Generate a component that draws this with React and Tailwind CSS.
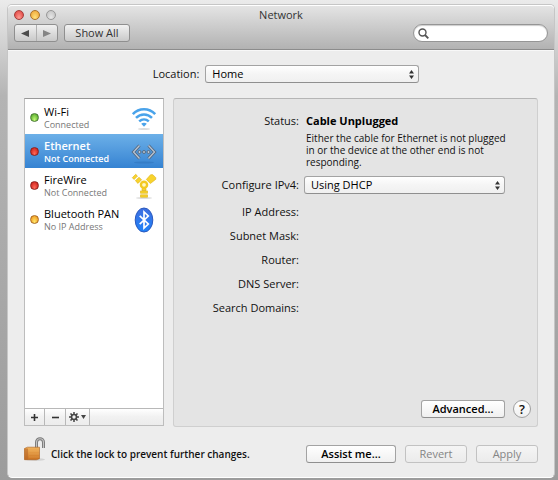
import { useState } from 'react'

const SERVICES = [
  { id: 'wifi', name: 'Wi-Fi', status: 'Connected', dot: 'green', Icon: WifiIcon },
  { id: 'ethernet', name: 'Ethernet', status: 'Not Connected', dot: 'red', Icon: EthernetIcon },
  { id: 'firewire', name: 'FireWire', status: 'Not Connected', dot: 'red', Icon: FireWireIcon },
  { id: 'bluetooth', name: 'Bluetooth PAN', status: 'No IP Address', dot: 'amber', Icon: BluetoothIcon },
]

const FIELDS = ['IP Address:', 'Subnet Mask:', 'Router:', 'DNS Server:', 'Search Domains:']

const DOTS = {
  green: 'bg-radial-[at_50%_80%] from-[#c3fa78] to-[#3f9a1c] border-[#4b7a35]',
  red: 'bg-radial-[at_50%_80%] from-[#ff6a5a] to-[#c4120f] border-[#8c2320]',
  amber: 'bg-radial-[at_50%_80%] from-[#ffe86a] to-[#ee8a12] border-[#a86a22]',
}

export default function App() {
  const [selected, setSelected] = useState('ethernet')

  return (
    <div className="min-h-screen flex flex-col pt-[4px] pb-[2px] pl-[7px] pr-[3px] bg-linear-to-b from-[#ebebeb] via-[#b4b4b4] via-20% to-[#9c9c9c] font-['Open_Sans','Noto_Sans',sans-serif] text-[11px] leading-4 font-medium text-[#111]">
      <div className="flex-1 flex flex-col rounded-[5px] border border-[#c6c6c6] border-b-white bg-[#ededed]">
        <header className="rounded-t-[4px] border-t border-t-white border-b border-b-[#8c8c8c] bg-linear-to-b from-[#e4e4e4] to-[#b2b2b2] pl-[6px] pr-[6px] h-[45px]">
          <div className="grid grid-cols-[1fr_auto_1fr] items-center h-[17px]">
            <div className="flex gap-[6px]">
              <button aria-label="Close" className="size-[10px] rounded-full border border-[#a33d3a] bg-radial-[at_50%_85%] from-[#ff9d93] to-[#dd3a38]" />
              <button aria-label="Minimize" className="size-[10px] rounded-full border border-[#a9722c] bg-radial-[at_50%_85%] from-[#ffe37e] to-[#ec9c2c]" />
              <button aria-label="Zoom" className="size-[10px] rounded-full border border-[#989898] bg-radial-[at_50%_85%] from-[#e8e8e8] to-[#bdbdbd]" />
            </div>
            <h1 className="text-[11px] leading-4 text-[#333]">Network</h1>
          </div>
          <div className="flex items-center pt-[1px]">
            <div className="flex h-[18px] w-[44px] rounded-[3px] border border-[#8f8f8f] bg-linear-to-b from-[#f0f0f0] to-[#c9c9c9]">
              <button aria-label="Back" className="flex-1 flex items-center justify-center border-r border-[#b0b0b0]">
                <svg className="w-[8px] h-[7px]" viewBox="0 0 8 7"><path d="M8 0v7L0 3.500z" fill="#4c4c4c" /></svg>
              </button>
              <button aria-label="Forward" className="flex-1 flex items-center justify-center">
                <svg className="w-[8px] h-[7px]" viewBox="0 0 8 7"><path d="M0 0v7l8-3.500z" fill="#858585" /></svg>
              </button>
            </div>
            <button className="ml-[6px] flex items-center justify-center h-[18px] w-[66px] rounded-[3px] border border-[#8f8f8f] bg-linear-to-b from-[#f2f2f2] to-[#c9c9c9] text-[#333]">Show All</button>
            <label className="ml-auto flex items-center h-[18px] w-[135px] rounded-full border border-[#959595] bg-white pl-[4px] pr-2 shadow-[inset_0_1px_1px_#ccc]">
              <svg className="size-[11px] shrink-0" viewBox="0 0 11 11" fill="none" stroke="#555">
                <circle cx="4.500" cy="4.500" r="3.500" strokeWidth="1.400" />
                <path d="M7 7l3.300 3.300" strokeWidth="1.900" />
              </svg>
              <input type="search" aria-label="Search" className="min-w-0 flex-1 bg-transparent pl-1 outline-none" />
            </label>
          </div>
        </header>

        <main className="flex-1 flex flex-col px-4 pb-[14px] border-t border-[#f8f8f8]">
          <div className="flex items-center justify-center pt-[14px] pl-[10px]">
            <label htmlFor="location" className="pr-[6px]">Location:</label>
            <Popup id="location" value="Home" options={['Home', 'Automatic']} className="w-[214px]" />
          </div>

          <div className="flex-1 flex gap-[9px] pt-[15px]">
            <aside className="w-[140px] shrink-0 flex flex-col mb-[1px] border border-[#bdbdbd] border-t-[#999] bg-white">
              <ul className="flex-1 pt-[1px]">
                {SERVICES.map((s) => (
                  <li key={s.id}>
                    <Service service={s} active={s.id === selected} onSelect={() => setSelected(s.id)} />
                  </li>
                ))}
              </ul>
              <div className="flex h-[17px] border-t border-[#b8b8b8] bg-linear-to-b from-white via-[#f1f1f1] to-[#ececec]">
                <button aria-label="Add service" className="w-[20px] flex items-center justify-center border-r border-[#b8b8b8]">
                  <svg className="size-[7px]" viewBox="0 0 7 7" stroke="#333" strokeWidth="1.600"><path d="M0 3.500h7M3.500 0v7" /></svg>
                </button>
                <button aria-label="Remove service" className="w-[21px] flex items-center justify-center border-r border-[#b8b8b8]">
                  <svg className="size-[7px]" viewBox="0 0 7 7" stroke="#333" strokeWidth="1.600"><path d="M0 3.500h7" /></svg>
                </button>
                <button aria-label="Service actions" className="w-[24px] flex items-center justify-center gap-[2px] border-r border-[#b8b8b8]">
                  <GearIcon />
                  <svg className="w-[5px] h-[4px]" viewBox="0 0 5 4"><path d="M0 0h5L2.500 4z" fill="#444" /></svg>
                </button>
              </div>
            </aside>

            <section className="flex-1 flex flex-col rounded-[3px] border border-[#cfcfcf] border-t-[#b5b5b5] bg-[#e4e4e4] pr-[6px] pb-[8px]">
              <div className="grid grid-cols-[125px_1fr] gap-x-[5px] pt-[14px]">
                <div className="text-right">Status:</div>
                <div className="pl-[2px]">
                  <strong className="block font-bold text-black">Cable Unplugged</strong>
                  <p className="max-w-[202px] pt-[3px] text-[10px] leading-[12px]">
                    Either the cable for Ethernet is not plugged in or the device at the other end is not responding.
                  </p>
                </div>
                <label htmlFor="ipv4" className="pt-[9px] text-right">Configure IPv4:</label>
                <div className="pt-[8px]">
                  <Popup id="ipv4" value="Using DHCP" options={['Using DHCP', 'Manually', 'Off']} className="w-[201px]" />
                </div>
              </div>
              <dl className="flex flex-col gap-2 pt-[10px] w-[125px] text-right">
                {FIELDS.map((f) => (
                  <dt key={f}>{f}</dt>
                ))}
              </dl>
              <div className="mt-auto flex items-center justify-end gap-[8px]">
                <PushButton className="w-[84px] font-semibold">Advanced...</PushButton>
                <button aria-label="Help" className="size-[18px] flex items-center justify-center rounded-full border border-[#a0a0a0] bg-linear-to-b from-white to-[#f0f0f0] text-[13px] font-semibold">?</button>
              </div>
            </section>
          </div>

          <footer className="flex items-end pt-[10px]">
            <button aria-label="Lock"><LockIcon /></button>
            <p className="flex-1 pl-[5px] pb-[1px] text-[10px] font-semibold whitespace-nowrap">Click the lock to prevent further changes.</p>
            <div className="flex gap-[9px]">
              <PushButton className="w-[90px] font-semibold">Assist me...</PushButton>
              <PushButton className="w-[62px]" disabled>Revert</PushButton>
              <PushButton className="w-[62px]" disabled>Apply</PushButton>
            </div>
          </footer>
        </main>
      </div>
    </div>
  )
}

function Service({ service, active, onSelect }) {
  const { name, status, dot, Icon } = service
  return (
    <button
      onClick={onSelect}
      className={`w-full h-[34px] flex items-center pt-[1px] pl-[5px] pr-[6px] text-left ${active ? 'bg-linear-to-b from-[#6cb0e8] to-[#3583d2] text-white' : 'text-black'}`}
    >
      <span className={`size-[9px] shrink-0 rounded-full border ${DOTS[dot]}`} />
      <span className="flex-1 pl-[5px] whitespace-nowrap">
        <span className={`block leading-[15px] ${active ? 'font-semibold' : ''}`}>{name}</span>
        <span className={`block text-[9px] leading-[12px] ${active ? 'font-semibold' : 'text-[#777]'}`}>{status}</span>
      </span>
      <Icon />
    </button>
  )
}

function Popup({ id, value, options, className }) {
  return (
    <div className={`relative ${className}`}>
      <select
        id={id}
        defaultValue={value}
        className="block w-full h-[18px] appearance-none rounded-[3px] border border-[#a3a3a3] border-b-[#8f8f8f] bg-linear-to-b from-white via-[#f5f5f5] via-50% to-[#f0f0f0] pl-[6px] leading-4 text-black"
      >
        {options.map((o) => (
          <option key={o}>{o}</option>
        ))}
      </select>
      <svg className="pointer-events-none absolute right-[5px] top-[5px] w-[5px] h-[9px]" viewBox="0 0 5 9" fill="#333">
        <path d="M0 3.500h5L2.500 0zM0 5.500h5L2.500 9z" />
      </svg>
    </div>
  )
}

function PushButton({ children, className, disabled }) {
  return (
    <button
      disabled={disabled}
      className={`h-[18px] flex items-center justify-center rounded-[3px] border bg-linear-to-b ${disabled ? 'border-[#c2c2c2] from-[#f5f5f5] to-[#ebebeb] text-[#858585]' : 'border-[#a3a3a3] border-b-[#8f8f8f] from-white to-[#f0f0f0] text-black'} ${className}`}
    >
      {children}
    </button>
  )
}

function WifiIcon() {
  return (
    <svg className="size-[26px] shrink-0" viewBox="0 0 26 26" fill="none" stroke="#4aa3ea" strokeWidth="2.500">
      <ellipse cx="13" cy="24" rx="6" ry="1" fill="#dcdcdc" stroke="none" />
      <path d="M1.800 9.200C8 2.500 18 2.500 24.200 9.200" />
      <path d="M5 12.900c4.600-4.600 11.400-4.600 16 0" />
      <path d="M8.200 16.400c2.900-2.700 6.700-2.700 9.600 0" />
      <path d="M10.200 18.800c1.700-1.500 3.900-1.500 5.600 0L13 21.800z" fill="#4aa3ea" stroke="none" />
    </svg>
  )
}

function EthernetIcon() {
  return (
    <svg className="size-[26px] shrink-0" viewBox="0 0 26 26" fill="none">
      <ellipse cx="13" cy="23.500" rx="10" ry="1" fill="#2c70b8" opacity=".5" />
      <path d="M8.500 6.500L2.500 13l6 6.500M17.500 6.500l6 6.500-6 6.500" stroke="#52667d" strokeWidth="3" />
      <path d="M8.500 6.500L2.500 13l6 6.500M17.500 6.500l6 6.500-6 6.500" stroke="#b9c5d3" strokeWidth="1.300" />
      <g fill="#b9c5d3" stroke="#52667d" strokeWidth=".9">
        <circle cx="8.500" cy="13" r="1.500" />
        <circle cx="13" cy="13" r="1.500" />
        <circle cx="17.500" cy="13" r="1.500" />
      </g>
    </svg>
  )
}

function FireWireIcon() {
  return (
    <svg className="size-[26px] shrink-0" viewBox="0 0 26 26">
      <ellipse cx="13" cy="25" rx="8" ry="1" fill="#dedede" />
      <g fill="#f8d32c" stroke="#dcae14" strokeWidth=".6">
        <path d="M1.300 4.700l3.400-3.400 1.800 1.800-3.400 3.400z" />
        <path d="M4.400 7.800l3.600-3.600 2.600 2.600L7 10.400z" />
        <path d="M15.300 6.500l4.300-4.800h2.200l3 3v1.600l-5.400 4.200z" />
        <path d="M11 15.500h4v2h-4zM9.500 17.900h7v2.400h-7zM9.500 21.800h7v2.400h-7z" />
      </g>
      <circle cx="13" cy="11.800" r="3.100" fill="#fff6c4" stroke="#f3c922" strokeWidth="2.400" />
    </svg>
  )
}

function BluetoothIcon() {
  return (
    <svg className="size-[26px] shrink-0" viewBox="0 0 26 26">
      <defs>
        <linearGradient id="bt" x1="0" y1="0" x2="0" y2="1">
          <stop offset="0" stopColor="#3f6fe0" />
          <stop offset="1" stopColor="#1f82f8" />
        </linearGradient>
      </defs>
      <ellipse cx="13" cy="13" rx="8.800" ry="12" fill="url(#bt)" stroke="#2857bd" />
      <path d="M8.700 8.800l8.600 8.200-4.300 4V5l4.300 4-8.600 8.200" fill="none" stroke="#fff" strokeWidth="1.700" />
    </svg>
  )
}

function GearIcon() {
  return (
    <svg className="size-[10px]" viewBox="0 0 10 10" fill="none" stroke="#444">
      <circle cx="5" cy="5" r="2.500" strokeWidth="1.600" />
      <path d="M5 0v2M5 8v2M0 5h2M8 5h2M1.500 1.500l1.400 1.400M7.100 7.100l1.400 1.400M8.500 1.500L7.100 2.900M2.900 7.100L1.500 8.500" strokeWidth="1.500" />
    </svg>
  )
}

function LockIcon() {
  return (
    <svg className="w-[22px] h-[26px]" viewBox="0 0 22 26">
      <defs>
        <linearGradient id="lock" x1="0" y1="0" x2="0" y2="1">
          <stop offset="0" stopColor="#f3b45c" />
          <stop offset="1" stopColor="#c9701f" />
        </linearGradient>
      </defs>
      <ellipse cx="11" cy="22.500" rx="10" ry="1.500" fill="#d3d3d3" />
      <path d="M12.500 12V5.500c0-5 7-5 7 0V11" fill="none" stroke="#777" strokeWidth="3" />
      <path d="M12.500 12V5.500c0-5 7-5 7 0V11" fill="none" stroke="#c4c4c4" strokeWidth="1.200" />
      <path d="M.5 11.500l3-1.300h12v11.500l-3 1H.5z" fill="url(#lock)" stroke="#a8601f" strokeWidth=".6" />
      <path d="M.5 11.500h3.500v11.200H.5z" fill="#b8682a" opacity=".6" />
      <path d="M5 14h10M5 17h10M5 20h10" stroke="#ffd08a" strokeWidth=".5" opacity=".4" />
    </svg>
  )
}
